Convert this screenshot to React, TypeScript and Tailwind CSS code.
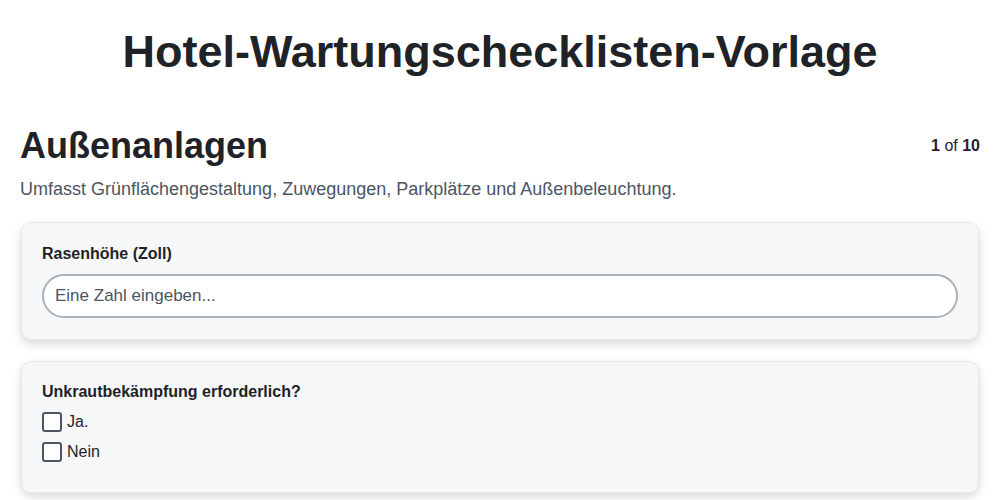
export default function App() {
  return (
    <div className="min-h-screen bg-white px-5 text-[#1f2328] [font-family:'Liberation_Sans',Arial,sans-serif]">
      <h1 className="pt-[26px] text-center text-[45px] font-bold leading-[52px]">
        Hotel-Wartungschecklisten-Vorlage
      </h1>

      <div className="mt-[46px] flex items-start justify-between">
        <h2 className="text-[36px] font-bold leading-[44px]">Außenanlagen</h2>
        <div className="pt-[10px] text-[16px]">
          <span className="font-bold">1</span> of <span className="font-bold">10</span>
        </div>
      </div>
      <p className="mt-[9px] text-[18px] leading-[24px] text-[#4b5563]">
        Umfasst Grünflächengestaltung, Zuwegungen, Parkplätze und Außenbeleuchtung.
      </p>

      <div className="mt-[21px] flex flex-col gap-[21px] px-px">
        <div className="rounded-[10px] border border-[#e5e7eb] bg-[#f6f7f9] px-5 pb-[21px] pt-[21px] shadow-[0_4px_10px_rgba(0,0,0,0.15)]">
          <label className="block text-[16px] font-bold leading-[20px]">Rasenhöhe (Zoll)</label>
          <input
            type="text"
            placeholder="Eine Zahl eingeben..."
            className="mt-[10px] h-[44px] w-full rounded-full border-2 border-[#a9b1b9] bg-white px-[11px] text-[17px] text-[#1f2328] outline-none placeholder:text-[#4b5563]"
          />
        </div>

        <div className="rounded-[10px] border border-[#e5e7eb] bg-[#f6f7f9] px-5 pb-[30px] pt-[20px] shadow-[0_4px_10px_rgba(0,0,0,0.15)]">
          <div className="text-[16px] font-bold leading-[20px]">Unkrautbekämpfung erforderlich?</div>
          <div className="mt-[10px] flex flex-col gap-[10px]">
            {["Ja.", "Nein"].map((opt) => (
              <label key={opt} className="flex items-center gap-[5px] text-[16px] leading-[20px]">
                <span className="h-[20px] w-[20px] rounded-[3px] border-2 border-[#4b5563] bg-white" />
                {opt}
              </label>
            ))}
          </div>
        </div>
      </div>
    </div>
  );
}
